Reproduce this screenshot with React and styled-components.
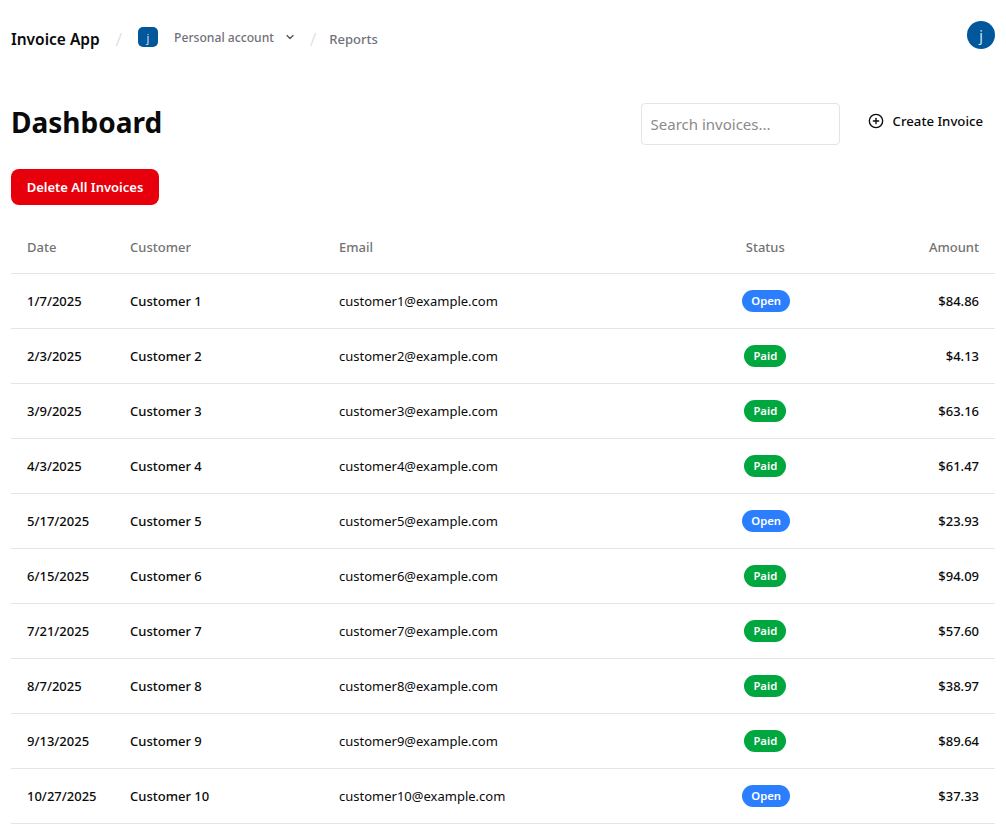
import React from "react";
import styled, { createGlobalStyle } from "styled-components";

const Global = createGlobalStyle`
  html, body { margin: 0; padding: 0; background: #fff; }
  body { font-family: "Noto Sans", "Open Sans", sans-serif; color: #0a0a0a; overflow: hidden; }
  * { box-sizing: border-box; }
`;

const Page = styled.div`
  width: 1006px;
  height: 830px;
  padding: 0 11px;
  overflow: hidden;
`;

const Nav = styled.nav`
  display: flex;
  align-items: center;
  justify-content: space-between;
  height: 78px;
`;

const Crumbs = styled.div`
  display: flex;
  align-items: center;
  height: 32px;
`;

const Brand = styled.span`
  font-size: 15.5px;
  font-weight: 600;
  color: #0a0a0a;
`;

const Slash = styled.span`
  font-size: 18px;
  font-weight: 300;
  color: #d4dcd8;
  margin: 0 ${(p) => p.$right}px 0 ${(p) => p.$left}px;
`;

const Tile = styled.span`
  width: 20px;
  height: 20px;
  border-radius: 5px;
  background: #01579b;
  color: #dbe7f1;
  font-size: 11px;
  display: flex;
  align-items: center;
  justify-content: center;
  margin-top: -4px;
`;

const Account = styled.span`
  font-size: 12.15px;
  font-weight: 500;
  color: #71717a;
  margin: -4px 0 0 16px;
`;

const Chevron = styled.svg`
  width: 12px;
  height: 12px;
  margin: -4px 0 0 10px;
  color: #52525b;
`;

const Reports = styled.span`
  font-size: 13px;
  font-weight: 500;
  color: #71717a;
`;

const Avatar = styled.span`
  width: 28px;
  height: 28px;
  border-radius: 50%;
  background: #01579b;
  color: #dbe7f1;
  font-size: 14px;
  display: flex;
  align-items: center;
  justify-content: center;
  margin-top: -8px;
`;

const TitleRow = styled.div`
  display: flex;
  align-items: center;
  justify-content: space-between;
  height: 62px;
  margin-top: 14px;
`;

const Title = styled.h1`
  margin: -2px 0 0;
  font-size: 28px;
  font-weight: 700;
  line-height: 60px;
  color: #0a0a0a;
`;

const Actions = styled.div`
  display: flex;
  align-items: center;
  padding-top: 2px;
`;

const Search = styled.input`
  width: 199px;
  height: 42px;
  border: 1px solid #e4e4e7;
  border-radius: 4px;
  padding: 0 9px;
  font-family: inherit;
  font-size: 15px;
  outline: none;
  &::placeholder { color: #8a8a8a; opacity: 1; }
`;

const CreateButton = styled.button`
  display: flex;
  align-items: center;
  gap: 9px;
  background: none;
  border: 0;
  padding: 0 12px 0 0;
  margin: -6px 0 0 28px;
  font-family: inherit;
  font-size: 13.2px;
  font-weight: 500;
  color: #0a0a0a;
`;

const DangerButton = styled.button`
  display: block;
  width: 148px;
  height: 36px;
  margin-top: 15px;
  background: #e7000b;
  color: #fff;
  border: 0;
  border-radius: 8px;
  font-family: inherit;
  font-size: 13px;
  font-weight: 600;
  padding: 0;
`;

const Table = styled.table`
  width: 984px;
  margin-top: 20px;
  border-collapse: collapse;
  table-layout: fixed;
  font-size: 13px;
`;

const Th = styled.th`
  height: 48px;
  padding: 0 16px 4px;
  font-weight: 500;
  color: #737373;
  text-align: ${(p) => p.$align || "left"};
  border-bottom: 1px solid #e5e5e5;
`;

const Td = styled.td`
  height: 55px;
  padding: 0 16px;
  color: #0a0a0a;
  font-weight: ${(p) => p.$weight || 400};
  text-align: ${(p) => p.$align || "left"};
  border-bottom: 1px solid #e5e5e5;
`;

const Badge = styled.span`
  display: inline-flex;
  align-items: center;
  justify-content: center;
  height: 22px;
  padding: 0 9px;
  border-radius: 11px;
  background: ${(p) => (p.$status === "Open" ? "#2b7fff" : "#00a63e")};
  color: #fff;
  font-size: 11.3px;
  font-weight: 600;
  vertical-align: middle;
`;

const rows = [
  ["1/7/2025", "Open", "$84.86"],
  ["2/3/2025", "Paid", "$4.13"],
  ["3/9/2025", "Paid", "$63.16"],
  ["4/3/2025", "Paid", "$61.47"],
  ["5/17/2025", "Open", "$23.93"],
  ["6/15/2025", "Paid", "$94.09"],
  ["7/21/2025", "Paid", "$57.60"],
  ["8/7/2025", "Paid", "$38.97"],
  ["9/13/2025", "Paid", "$89.64"],
  ["10/27/2025", "Open", "$37.33"],
];

export default function App() {
  return (
    <>
      <Global />
      <Page>
        <Nav>
          <Crumbs>
            <Brand>Invoice App</Brand>
            <Slash $left={16} $right={16}>/</Slash>
            <Tile>j</Tile>
            <Account>Personal account</Account>
            <Chevron viewBox="0 0 24 24" fill="none" stroke="currentColor" strokeWidth="2.5" strokeLinecap="round" strokeLinejoin="round">
              <path d="m6 9 6 6 6-6" />
            </Chevron>
            <Slash $left={14} $right={13}>/</Slash>
            <Reports>Reports</Reports>
          </Crumbs>
          <Avatar>j</Avatar>
        </Nav>
        <TitleRow>
          <Title>Dashboard</Title>
          <Actions>
            <Search placeholder="Search invoices..." />
            <CreateButton>
              <svg width="16" height="16" viewBox="0 0 24 24" fill="none" stroke="currentColor" strokeWidth="2" strokeLinecap="round" strokeLinejoin="round">
                <circle cx="12" cy="12" r="10" />
                <path d="M8 12h8" />
                <path d="M12 8v8" />
              </svg>
              Create Invoice
            </CreateButton>
          </Actions>
        </TitleRow>
        <DangerButton>Delete All Invoices</DangerButton>
        <Table>
          <colgroup>
            <col style={{ width: 103 }} />
            <col style={{ width: 209 }} />
            <col style={{ width: 403.3 }} />
            <col style={{ width: 78 }} />
            <col />
          </colgroup>
          <thead>
            <tr>
              <Th>Date</Th>
              <Th>Customer</Th>
              <Th>Email</Th>
              <Th $align="center">Status</Th>
              <Th $align="right">Amount</Th>
            </tr>
          </thead>
          <tbody>
            {rows.map(([date, status, amount], i) => (
              <tr key={date}>
                <Td $weight={500}>{date}</Td>
                <Td $weight={500}>Customer {i + 1}</Td>
                <Td>customer{i + 1}@example.com</Td>
                <Td $align="center"><Badge $status={status}>{status}</Badge></Td>
                <Td $align="right" $weight={500}>{amount}</Td>
              </tr>
            ))}
          </tbody>
        </Table>
      </Page>
    </>
  );
}
